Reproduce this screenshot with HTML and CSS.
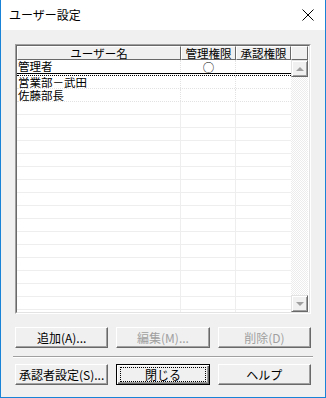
FILE: index.html
```html
<!DOCTYPE html>
<html lang="ja">
<head>
  <meta charset="UTF-8" />
  <title>ユーザー設定</title>
  <link rel="stylesheet" href="styles.css">
</head>
<body>

<div class="window">
  <div class="titlebar">
    <span class="title">ユーザー設定</span>
    <svg class="close" width="12" height="12" viewBox="0 0 12 12">
      <path d="M0.5 0.5 L11.5 11.5 M11.5 0.5 L0.5 11.5" stroke="#000" stroke-width="1" fill="none"/>
    </svg>
  </div>

  <div class="body">
    <div class="listbox">
      <div class="grid">
        <div class="head-row">
          <div class="hcell c-name">ユーザー名</div>
          <div class="hcell c-admin">管理権限</div>
          <div class="hcell c-appr">承認権限</div>
          <div class="hcell c-sb"></div>
        </div>
        <div class="rows-wrap">
          <div class="rows">
            <div class="row current">
              <div class="cell c-name">管理者</div>
              <div class="cell c-admin mark">○</div>
              <div class="cell c-appr"></div>
            </div>
            <div class="row">
              <div class="cell c-name">営業部－武田</div>
              <div class="cell c-admin"></div>
              <div class="cell c-appr"></div>
            </div>
            <div class="row">
              <div class="cell c-name">佐藤部長</div>
              <div class="cell c-admin"></div>
              <div class="cell c-appr"></div>
            </div>
            <div class="filler"></div>
          </div>
          <div class="scrollbar">
            <div class="sb-btn"><span class="arrow up"></span></div>
            <div class="sb-track"></div>
            <div class="sb-btn"><span class="arrow down"></span></div>
          </div>
        </div>
      </div>
    </div>

    <div class="btn-row">
      <button class="btn">追加(A)...</button>
      <button class="btn" disabled>編集(M)...</button>
      <button class="btn" disabled>削除(D)</button>
    </div>

    <div class="separator"></div>

    <div class="btn-row">
      <button class="btn">承認者設定(S)...</button>
      <button class="btn default"><span class="focus">閉じる</span></button>
      <button class="btn">ヘルプ</button>
    </div>
  </div>
</div>

</body>
</html>
```

FILE: styles.css
```css
* { box-sizing: border-box; }
body { margin: 0; font-family: "Noto Sans CJK JP", "Liberation Sans", sans-serif; font-size: 12px; color: #000; }

.window { width: 326px; height: 398px; border: 1px solid #1883d7; border-top: none; background: #f0f0f0; display: flex; flex-direction: column; }
.titlebar { height: 30px; background: #fff; display: flex; align-items: center; justify-content: space-between; padding: 0 10px 0 8px; }
.title { font-size: 12px; line-height: 14px; }
.close { display: block; margin-right: 1px; }

.body { flex: 1; padding: 14px 14px 0 14px; display: flex; flex-direction: column; }

.listbox { height: 270px; border: 1px solid; border-color: #a0a0a0 #fff #fff #a0a0a0; }
.grid { height: 100%; border: 1px solid; border-color: #696969 #e3e3e3 #e3e3e3 #696969; background: #fff; display: flex; flex-direction: column; }

.head-row { display: flex; height: 14px; }
.hcell { height: 14px; line-height: 12px; font-size: 11.5px; text-align: center; background: #f0f0f0; border: 1px solid; border-color: #fff #696969 #696969 #fff; white-space: nowrap; }
.c-name { width: 164px; }
.c-admin { width: 55px; }
.c-appr { width: 55px; }
.c-sb { width: 17px; }

.rows-wrap { flex: 1; display: flex; min-height: 0; }
.rows { width: 274px; display: flex; flex-direction: column; }
.row { display: flex; height: 13px; line-height: 12px; border-bottom: 1px dotted #e2e2e2; }
.row.current { height: 14px; border-bottom: 1px solid #000; }
.row.current + .row { border-top: 1px dotted #000; height: 14px; margin-top: 1px; }
.cell { height: 12px; line-height: 12px; font-size: 11.5px; padding-left: 1px; white-space: nowrap; border-right: 1px dotted #e2e2e2; }
.cell.c-appr { border-right: none; }
.mark { text-align: center; padding-top: 1px; }
.filler { flex: 1; background:
  repeating-linear-gradient(to bottom, transparent 0 12px, #eeeeee 12px 13px),
  linear-gradient(to right, transparent 163px, #eeeeee 163px 164px, transparent 164px 218px, #eeeeee 218px 219px, transparent 219px); }

.scrollbar { width: 17px; display: flex; flex-direction: column; }
.sb-btn { height: 17px; background: #f0f0f0; border: 1px solid; border-color: #e3e3e3 #696969 #696969 #e3e3e3; display: flex; align-items: center; justify-content: center; box-shadow: inset 1px 1px 0 #fff, inset -1px -1px 0 #a0a0a0; }
.sb-track { flex: 1; background: repeating-conic-gradient(#fff 0 25%, #ececec 0 50%) 0 0 / 2px 2px; }
.arrow { width: 0; height: 0; border-left: 4px solid transparent; border-right: 4px solid transparent; }
.arrow.up { border-bottom: 4px solid #a0a0a0; }
.arrow.down { border-top: 4px solid #a0a0a0; }

.btn-row { display: flex; gap: 8px; margin-top: 13px; }
.btn { width: 94px; height: 21px; padding: 0; font-family: inherit; font-size: 12px; color: #000; background: #f0f0f0; border: 1px solid; border-color: #fff #696969 #696969 #fff; box-shadow: inset -1px -1px 0 #a0a0a0; display: flex; align-items: center; justify-content: center; }
.btn:disabled { color: #a0a0a0; }
.btn.default { border: 1px solid #000; box-shadow: inset 1px 1px 0 #fff, inset -1px -1px 0 #696969, inset -2px -2px 0 #a0a0a0; }
.focus { display: flex; align-items: center; justify-content: center; width: 86px; height: 15px; border: 1px dotted #000; }

.separator { height: 2px; margin: 8px -2px 0 -2px; border-top: 1px solid #a0a0a0; border-bottom: 1px solid #fff; }
.separator + .btn-row { margin-top: 6px; }
```
